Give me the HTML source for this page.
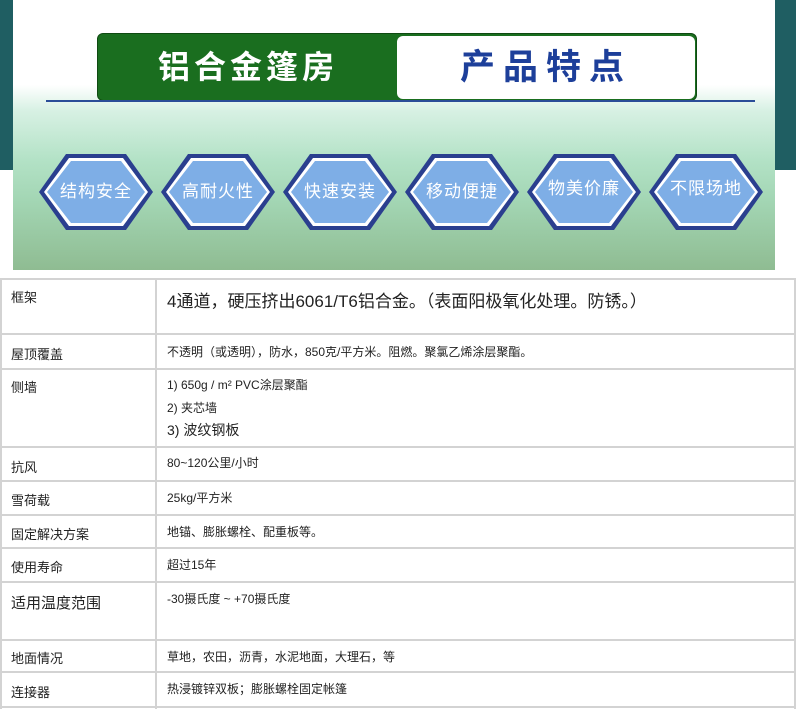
<!DOCTYPE html>
<html><head><meta charset="utf-8"><style>
*{margin:0;padding:0;box-sizing:border-box}
body{width:796px;height:709px;background:#fff;position:relative;overflow:hidden;font-family:"Liberation Sans","Noto Sans CJK SC",sans-serif}
.teal{position:absolute;top:0;height:170px;background:#1f5e62}
.panel{position:absolute;left:13px;top:0;width:762px;height:270px;background:linear-gradient(to bottom,#fff 0,#fff 85px,#d8f1e4 110px,#b3e2c6 160px,#a3d6b4 200px,#8fbc92 270px)}
.tbox{position:absolute;left:97px;top:33px;width:600px;height:68px;background:#1a6e1f;border-radius:6px;border:1px solid #0f4a12}
.tl{position:absolute;left:0;top:0;width:300px;height:66px;color:#fff;font-size:32px;line-height:66px;text-align:center;letter-spacing:4px;font-weight:bold}
.tr{position:absolute;left:299px;top:2px;width:298px;height:63px;background:#fff;border-radius:6px;color:#1d3f9a;font-size:35px;line-height:63px;text-align:center;letter-spacing:8px;font-weight:bold}
.bl{position:absolute;left:46px;top:100px;width:709px;height:2px;background:#2a4d98}
.hex{position:absolute;top:152px;width:116px;height:80px}
.hex span{position:absolute;left:0;top:0;width:116px;height:80px;line-height:80px;text-align:center;color:#fff;font-size:17px;letter-spacing:1px}
.h{position:absolute;left:0;width:796px;height:2px;background:#d3d3d3}
.v{position:absolute;top:279px;height:430px;width:2px;background:#d3d3d3}
.t{position:absolute;font-size:12px;color:#222;white-space:nowrap}
.k{left:11px;font-size:13px}
.c{left:167px}
</style></head><body>
<div class="teal" style="left:0;width:13px"></div>
<div class="teal" style="left:775px;width:21px"></div>
<div class="panel"></div>
<div class="tbox"><div class="tl">铝合金篷房</div><div class="tr">产品特点</div></div>
<div class="bl"></div>
<svg width="0" height="0" style="position:absolute"><defs><g id="h"><polygon points="1,40 28,2 88,2 115,40 88,78 28,78" fill="#2a3f8f"/><polygon points="6,40 31,6 85,6 110,40 85,74 31,74" fill="#fff"/><polygon points="9,40 33,9 83,9 107,40 83,71 33,71" fill="#7eaee6"/></g></defs></svg>
<div class="hex" style="left:38px"><svg width="116" height="80"><use href="#h"/></svg><span>结构安全</span></div>
<div class="hex" style="left:160px"><svg width="116" height="80"><use href="#h"/></svg><span>高耐火性</span></div>
<div class="hex" style="left:282px"><svg width="116" height="80"><use href="#h"/></svg><span>快速安装</span></div>
<div class="hex" style="left:404px"><svg width="116" height="80"><use href="#h"/></svg><span>移动便捷</span></div>
<div class="hex" style="left:526px"><svg width="116" height="80"><use href="#h"/></svg><span style="line-height:74px">物美价廉</span></div>
<div class="hex" style="left:648px"><svg width="116" height="80"><use href="#h"/></svg><span style="line-height:74px">不限场地</span></div>

<div class="h" style="top:278px"></div>
<div class="h" style="top:333px"></div>
<div class="h" style="top:368px"></div>
<div class="h" style="top:446px"></div>
<div class="h" style="top:480px"></div>
<div class="h" style="top:514px"></div>
<div class="h" style="top:547px"></div>
<div class="h" style="top:581px"></div>
<div class="h" style="top:639px"></div>
<div class="h" style="top:671px"></div>
<div class="h" style="top:706px"></div>
<div class="v" style="left:0"></div>
<div class="v" style="left:155px"></div>
<div class="v" style="left:794px"></div>

<div class="t k" style="top:287px">框架</div>
<div class="t c" style="top:287px;font-size:17px">4通道，硬压挤出6061/T6铝合金。（表面阳极氧化处理。防锈。）</div>
<div class="t k" style="top:344px">屋顶覆盖</div>
<div class="t c" style="top:343px">不透明（或透明），防水，850克/平方米。阻燃。聚氯乙烯涂层聚酯。</div>
<div class="t k" style="top:377px">侧墙</div>
<div class="t c" style="top:376px">1) 650g / m² PVC涂层聚酯</div>
<div class="t c" style="top:399px">2) 夹芯墙</div>
<div class="t c" style="top:420px;font-size:14px">3) 波纹钢板</div>
<div class="t k" style="top:457px">抗风</div>
<div class="t c" style="top:454px">80~120公里/小时</div>
<div class="t k" style="top:490px">雪荷载</div>
<div class="t c" style="top:489px">25kg/平方米</div>
<div class="t k" style="top:524px">固定解决方案</div>
<div class="t c" style="top:523px">地锚、膨胀螺栓、配重板等。</div>
<div class="t k" style="top:557px">使用寿命</div>
<div class="t c" style="top:556px">超过15年</div>
<div class="t k" style="top:592px;font-size:15px">适用温度范围</div>
<div class="t c" style="top:590px">-30摄氏度 ~ +70摄氏度</div>
<div class="t k" style="top:648px">地面情况</div>
<div class="t c" style="top:648px">草地，农田，沥青，水泥地面，大理石，等</div>
<div class="t k" style="top:682px">连接器</div>
<div class="t c" style="top:680px">热浸镀锌双板；膨胀螺栓固定帐篷</div>
</body></html>
